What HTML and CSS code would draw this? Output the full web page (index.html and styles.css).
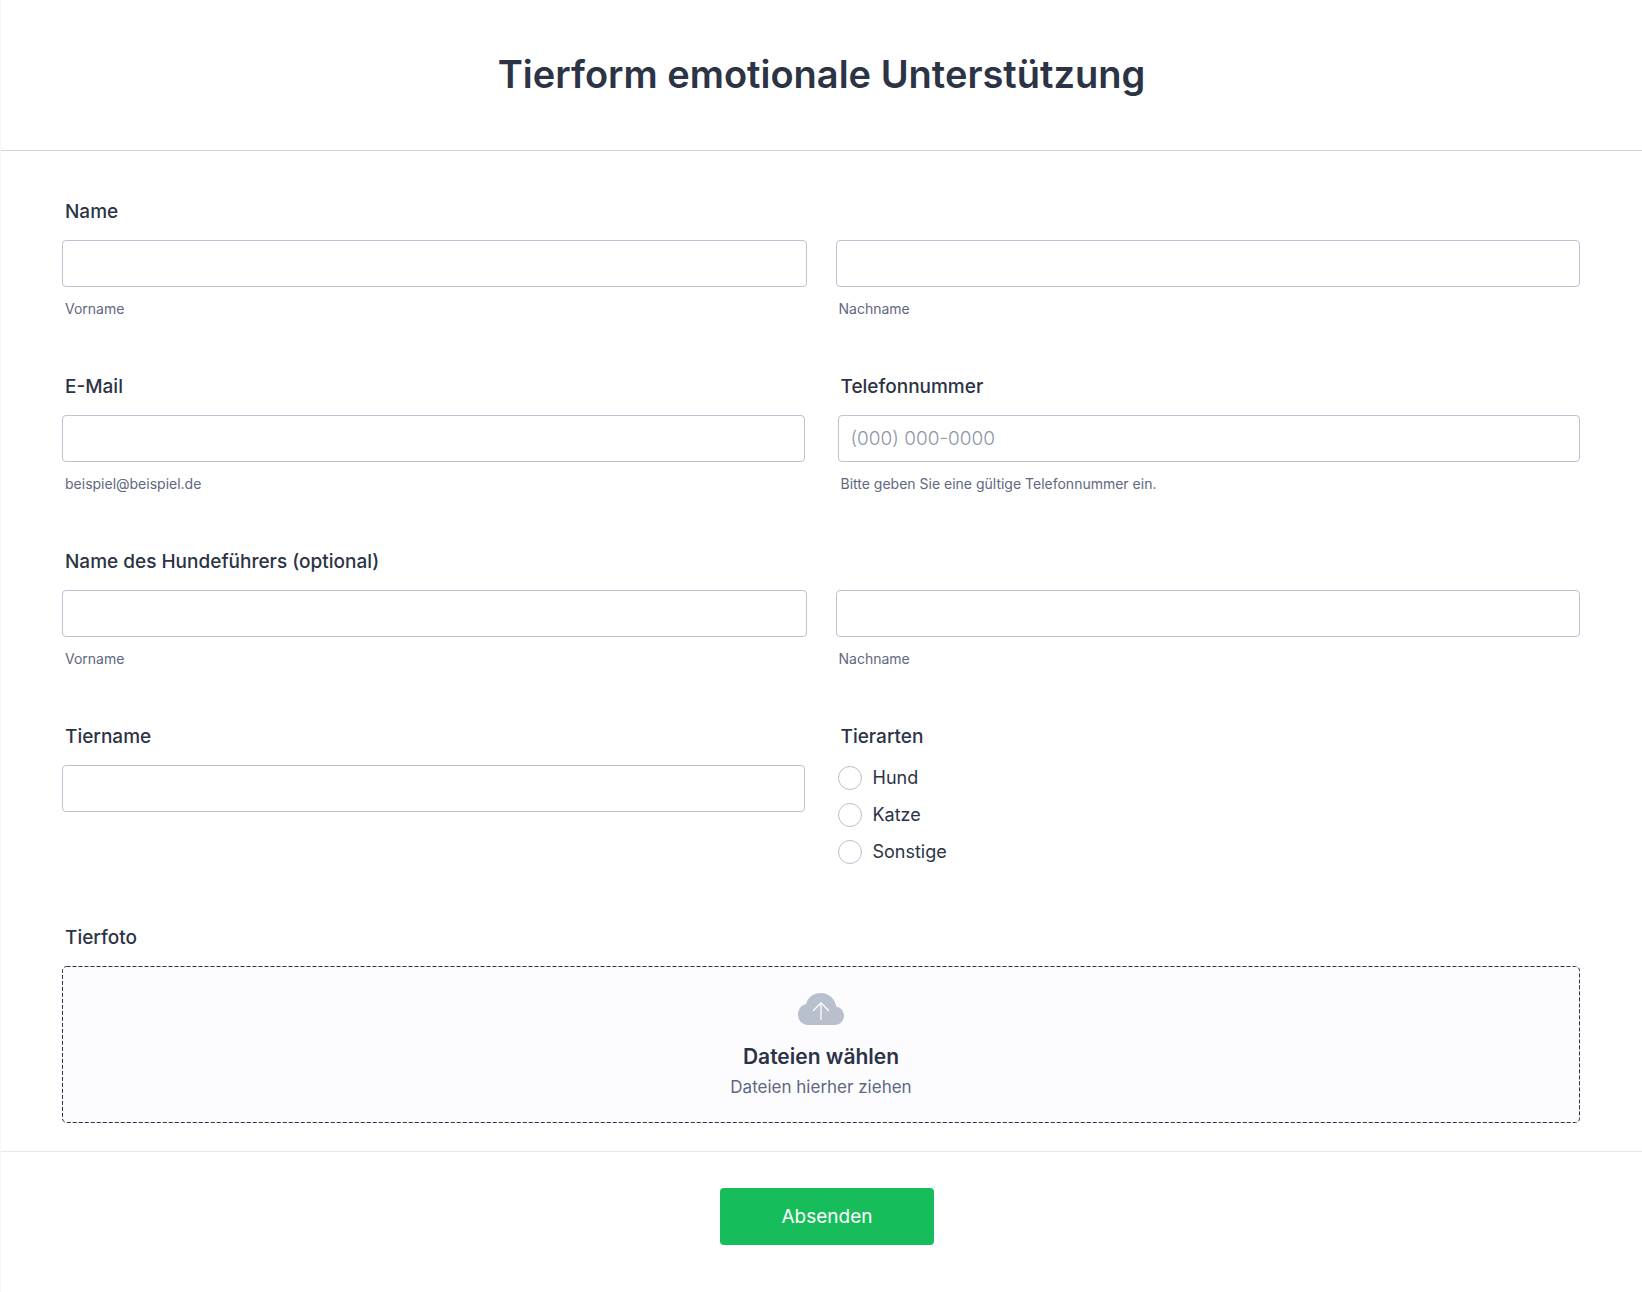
FILE: index.html
```html
<!DOCTYPE html>
<html lang="de">
<head>
<meta charset="utf-8">
<meta name="viewport" content="width=device-width, initial-scale=1">
<title>Tierform emotionale Unterstützung</title>
<link rel="stylesheet" href="styles.css">
</head>
<body>
<form class="form">
  <header class="form-header">
    <h1 class="form-title">Tierform emotionale Unterstützung</h1>
  </header>

  <div class="form-body">
    <fieldset class="group">
      <legend class="label">Name</legend>
      <div class="columns columns-name">
        <div class="sub-field">
          <input class="input" type="text" id="first-name">
          <label class="sub-label" for="first-name">Vorname</label>
        </div>
        <div class="sub-field">
          <input class="input" type="text" id="last-name">
          <label class="sub-label" for="last-name">Nachname</label>
        </div>
      </div>
    </fieldset>

    <div class="columns">
      <div class="group">
        <label class="label" for="email">E-Mail</label>
        <div class="sub-field">
          <input class="input" type="email" id="email" aria-describedby="email-hint">
          <span class="sub-label" id="email-hint">beispiel@beispiel.de</span>
        </div>
      </div>
      <div class="group">
        <label class="label" for="phone">Telefonnummer</label>
        <div class="sub-field">
          <input class="input" type="tel" id="phone" placeholder="(000) 000-0000" aria-describedby="phone-hint">
          <span class="sub-label" id="phone-hint">Bitte geben Sie eine gültige Telefonnummer ein.</span>
        </div>
      </div>
    </div>

    <fieldset class="group">
      <legend class="label">Name des Hundeführers (optional)</legend>
      <div class="columns columns-name">
        <div class="sub-field">
          <input class="input" type="text" id="handler-first">
          <label class="sub-label" for="handler-first">Vorname</label>
        </div>
        <div class="sub-field">
          <input class="input" type="text" id="handler-last">
          <label class="sub-label" for="handler-last">Nachname</label>
        </div>
      </div>
    </fieldset>

    <div class="columns">
      <div class="group">
        <label class="label" for="pet-name">Tiername</label>
        <input class="input" type="text" id="pet-name">
      </div>
      <fieldset class="group">
        <legend class="label">Tierarten</legend>
        <div class="options">
          <label class="option"><input class="radio" type="radio" name="species" value="hund">Hund</label>
          <label class="option"><input class="radio" type="radio" name="species" value="katze">Katze</label>
          <label class="option"><input class="radio" type="radio" name="species" value="sonstige">Sonstige</label>
        </div>
      </fieldset>
    </div>

    <div class="group">
      <label class="label" for="photo">Tierfoto</label>
      <label class="upload">
        <svg class="upload-outline" aria-hidden="true"><rect class="upload-dash" x="0.5" y="0.5" rx="4"/></svg>
        <input class="upload-input" type="file" id="photo">
        <svg class="upload-icon" viewBox="0 0 46 32" aria-hidden="true">
          <path fill="#b8bfcd" d="M10 32C4.500 32 0 27.500 0 21.500C0 16 3.500 11.800 8.200 11C9.500 4.500 15.500 0 23 0C30.500 0 37 5.500 38.200 13.500C42.500 14.200 46 18 46 22.700C46 28 41.700 32 36.500 32Z"/>
          <path fill="none" stroke="#fcfcff" stroke-width="1.300" stroke-linecap="round" stroke-linejoin="round" d="M23 26.500V9.700M15.500 17.500L23 9.700L30.500 17.500"/>
        </svg>
        <span class="upload-title">Dateien wählen</span>
        <span class="upload-text">Dateien hierher ziehen</span>
      </label>
    </div>
  </div>

  <footer class="form-footer">
    <button class="submit" type="submit">Absenden</button>
  </footer>
</form>
</body>
</html>
```
FILE: styles.css
```css
* {
  box-sizing: border-box;
}

body {
  margin: 0;
  background: #fff;
  color: #2c3345;
  font-family: Inter, "Liberation Sans", sans-serif;
}

.form {
  min-height: 100vh;
  border-left: 1px solid #f6f7f9;
}

.form-header {
  padding: 50px 61px 52px;
  border-bottom: 1px solid #d0d4de;
  text-align: center;
}

.form-title {
  margin: 0;
  font-size: 38px;
  font-weight: 600;
  line-height: 48px;
}

.form-body {
  display: flex;
  flex-direction: column;
  gap: 56px;
  padding: 49px 62px 28px 61px;
}

.columns {
  display: grid;
  grid-template-columns: 1fr 1fr;
  column-gap: 33px;
}

.columns-name {
  column-gap: 29px;
}

.group {
  min-width: 0;
  margin: 0;
  padding: 0;
  border: 0;
}

.label {
  display: block;
  margin-bottom: 16px;
  padding: 0 3px;
  font-size: 19px;
  font-weight: 500;
  line-height: 24px;
}

.sub-field {
  display: flex;
  flex-direction: column;
  gap: 12px;
}

.sub-label {
  padding: 0 3px;
  color: #5f6880;
  font-size: 14px;
  line-height: 20px;
}

.input {
  display: block;
  width: 100%;
  height: 47px;
  padding: 0 12px;
  border: 1px solid #bcc2d0;
  border-radius: 4px;
  background: #fff;
  color: #2c3345;
  font: 400 19px Inter, "Liberation Sans", sans-serif;
}

.input::placeholder {
  color: #8d95a7;
  font-weight: 300;
  opacity: 1;
}

.options {
  display: flex;
  flex-direction: column;
  align-items: flex-start;
  gap: 13px;
  padding: 1px 0 6px;
}

.option {
  display: flex;
  align-items: center;
  gap: 11px;
  font-size: 18px;
  line-height: 24px;
}

.radio {
  width: 24px;
  height: 24px;
  margin: 0;
  border: 1px solid #b8bfcd;
  border-radius: 50%;
  background: #fff;
  appearance: none;
}

.radio:checked {
  border: 7px solid #18bd5b;
}

.upload {
  position: relative;
  display: flex;
  flex-direction: column;
  align-items: center;
  padding: 27px 16px 21px;
  border-radius: 4px;
  background: #fcfcff;
  cursor: pointer;
}

.upload-outline {
  position: absolute;
  inset: 0;
  width: 100%;
  height: 100%;
}

.upload-dash {
  width: calc(100% - 1px);
  height: calc(100% - 1px);
  fill: none;
  stroke: #2c3345;
  stroke-dasharray: 4 2;
}

.upload-input {
  position: absolute;
  width: 1px;
  height: 1px;
  opacity: 0;
}

.upload-icon {
  width: 46px;
  height: 32px;
  margin-bottom: 17px;
}

.upload-title {
  font-size: 21px;
  font-weight: 600;
  line-height: 30px;
}

.upload-text {
  color: #5f6880;
  font-size: 17px;
  line-height: 30px;
}

.form-footer {
  display: flex;
  justify-content: center;
  padding: 36px 0 47px 11px;
  border-top: 1px solid #e5e7ee;
}

.submit {
  min-width: 214px;
  height: 57px;
  padding: 0 24px;
  border: 0;
  border-radius: 4px;
  background: #18bd5b;
  color: #fff;
  font: 400 19px Inter, "Liberation Sans", sans-serif;
}
```
